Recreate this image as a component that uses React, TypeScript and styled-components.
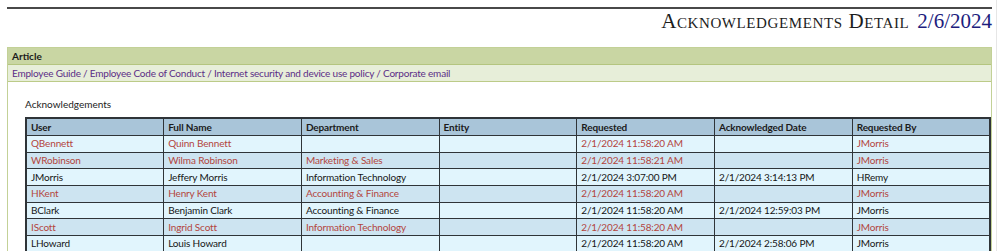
import React from "react";
import styled, { createGlobalStyle } from "styled-components";

type Ack = {
  user: string;
  fullName: string;
  department: string;
  entity: string;
  requested: string;
  acknowledged: string;
  requestedBy: string;
};

const rows: Ack[] = [
  { user: "QBennett", fullName: "Quinn Bennett", department: "", entity: "", requested: "2/1/2024 11:58:20 AM", acknowledged: "", requestedBy: "JMorris" },
  { user: "WRobinson", fullName: "Wilma Robinson", department: "Marketing & Sales", entity: "", requested: "2/1/2024 11:58:21 AM", acknowledged: "", requestedBy: "JMorris" },
  { user: "JMorris", fullName: "Jeffery Morris", department: "Information Technology", entity: "", requested: "2/1/2024 3:07:00 PM", acknowledged: "2/1/2024 3:14:13 PM", requestedBy: "HRemy" },
  { user: "HKent", fullName: "Henry Kent", department: "Accounting & Finance", entity: "", requested: "2/1/2024 11:58:20 AM", acknowledged: "", requestedBy: "JMorris" },
  { user: "BClark", fullName: "Benjamin Clark", department: "Accounting & Finance", entity: "", requested: "2/1/2024 11:58:20 AM", acknowledged: "2/1/2024 12:59:03 PM", requestedBy: "JMorris" },
  { user: "IScott", fullName: "Ingrid Scott", department: "Information Technology", entity: "", requested: "2/1/2024 11:58:20 AM", acknowledged: "", requestedBy: "JMorris" },
  { user: "LHoward", fullName: "Louis Howard", department: "", entity: "", requested: "2/1/2024 11:58:20 AM", acknowledged: "2/1/2024 2:58:06 PM", requestedBy: "JMorris" },
];

const columns = [
  "User",
  "Full Name",
  "Department",
  "Entity",
  "Requested",
  "Acknowledged Date",
  "Requested By",
];

const GlobalStyle = createGlobalStyle`
  body {
    margin: 0;
    background: #fff;
    font-family: Lato, "Liberation Sans", sans-serif;
  }
`;

const Page = styled.div`
  width: 985px;
  padding: 7px 4px 0 7px;
  border-right: 1px solid #e6e6e6;
  height: 244px;
  overflow: hidden;
`;

const TopRule = styled.div`
  border-top: 2px solid #484848;
`;

const TitleRow = styled.div`
  display: flex;
  justify-content: flex-end;
  align-items: baseline;
  gap: 8px;
  height: 38px;
  padding-top: 0;
  box-sizing: border-box;
  font-family: "Liberation Serif", serif;
  font-size: 21px;
  line-height: 24px;
`;

const Title = styled.span`
  color: #1c1c1c;
  font-variant: small-caps;
  letter-spacing: 0.6px;
`;

const DateText = styled.span`
  color: #1d1d7e;
`;

const Panel = styled.div`
  border: 1px solid #c3d197;
  border-bottom: none;
`;

const PanelHeader = styled.div`
  height: 16px;
  line-height: 16px;
  padding-left: 4px;
  background: #c9d6a3;
  border-bottom: 1px solid #b4c57f;
  font-size: 10px;
  font-weight: 700;
  color: #1a1a1a;
`;

const Breadcrumb = styled.div`
  height: 16px;
  line-height: 16px;
  padding-left: 4px;
  background: #e7eed9;
  border-bottom: 1px solid #bccb88;
  font-size: 10px;
  letter-spacing: -0.2px;
  color: #5b2d86;
`;

const PanelBody = styled.div`
  padding: 15px 0 0 17px;
`;

const Caption = styled.div`
  font-size: 10px;
  color: #222;
  line-height: 14px;
  margin-bottom: 6px;
`;

const Table = styled.table`
  width: 100%;
  table-layout: fixed;
  border-collapse: collapse;
  border: 2px solid #2f3438;
  font-size: 10px;
  letter-spacing: -0.15px;
`;

const HeadCell = styled.th`
  height: 16px;
  padding: 0 4px;
  text-align: left;
  font-weight: 700;
  color: #1b1b1b;
  background: #a9c5d9;
  border: 1px solid #2f3438;
  line-height: 15px;
`;

const Row = styled.tr<{ $alt: boolean }>`
  background: ${(p) => (p.$alt ? "#cde4f1" : "#e1f5fd")};
`;

const Cell = styled.td<{ $pending: boolean }>`
  height: 15.7px;
  padding: 0 4px;
  border: 1px solid #2f3438;
  line-height: 15px;
  white-space: nowrap;
  overflow: hidden;
  color: ${(p) => (p.$pending ? "#b3443d" : "#161616")};
`;

const App: React.FC = () => {
  return (
    <Page>
      <GlobalStyle />
      <TopRule />
      <TitleRow>
        <Title>Acknowledgements Detail</Title>
        <DateText>2/6/2024</DateText>
      </TitleRow>
      <Panel>
        <PanelHeader>Article</PanelHeader>
        <Breadcrumb>
          Employee Guide / Employee Code of Conduct / Internet security and
          device use policy / Corporate email
        </Breadcrumb>
        <PanelBody>
          <Caption>Acknowledgements</Caption>
          <Table>
            <thead>
              <tr>
                {columns.map((c) => (
                  <HeadCell key={c}>{c}</HeadCell>
                ))}
              </tr>
            </thead>
            <tbody>
              {rows.map((r, i) => {
                const pending = r.acknowledged === "";
                return (
                  <Row key={r.user} $alt={i % 2 === 1}>
                    <Cell $pending={pending}>{r.user}</Cell>
                    <Cell $pending={pending}>{r.fullName}</Cell>
                    <Cell $pending={pending}>{r.department}</Cell>
                    <Cell $pending={pending}>{r.entity}</Cell>
                    <Cell $pending={pending}>{r.requested}</Cell>
                    <Cell $pending={pending}>{r.acknowledged}</Cell>
                    <Cell $pending={pending}>{r.requestedBy}</Cell>
                  </Row>
                );
              })}
            </tbody>
          </Table>
        </PanelBody>
      </Panel>
    </Page>
  );
};

export default App;
